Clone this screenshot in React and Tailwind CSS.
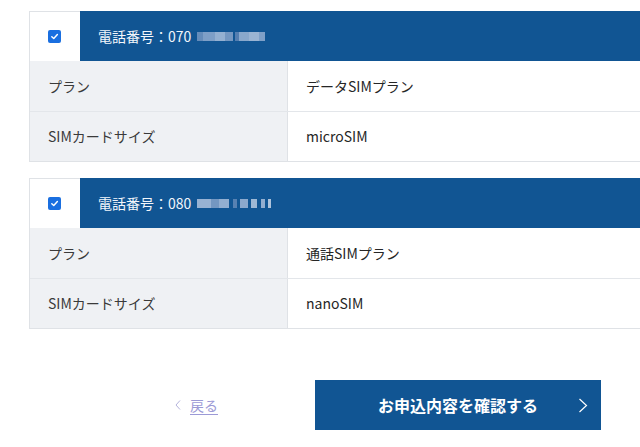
import React from "react";

const font = { fontFamily: '"Noto Sans CJK JP", "Noto Sans", sans-serif' };

function Mosaic({ blocks }) {
  return (
    <span className="inline-flex items-center ml-[6px] h-[10px] opacity-90">
      {blocks.map((b, i) => (
        <span
          key={i}
          className="inline-block h-[9px]"
          style={{ width: b[0], background: b[1], marginLeft: b[2] || 0 }}
        />
      ))}
    </span>
  );
}

function Check() {
  return (
    <span className="flex items-center justify-center w-[13px] h-[13px] rounded-[2px] bg-[#1a6fe0]">
      <svg width="9" height="9" viewBox="0 0 10 10">
        <path d="M2 5.2 L4.2 7.3 L8.2 2.8" fill="none" stroke="white" strokeWidth="1.6" strokeLinecap="round" strokeLinejoin="round" />
      </svg>
    </span>
  );
}

function Card({ number, blocks, plan, size }) {
  return (
    <div className="w-[640px] border-l border-b border-[#dfe2e6]">
      <div className="flex h-[50px]">
        <div className="w-[50px] flex items-center justify-center bg-white border-t border-[#dfe2e6] pr-[2px]">
          <Check />
        </div>
        <div className="flex-1 bg-[#115593] flex items-center pl-[18px] text-[#f2f6fb] text-[14px]">
          <span>電話番号：{number}</span>
          <Mosaic blocks={blocks} />
        </div>
      </div>
      {[
        ["プラン", plan],
        ["SIMカードサイズ", size],
      ].map(([k, v], i) => (
        <div key={i} className={"flex h-[50px] text-[14px] " + (i === 0 ? "" : "border-t border-[#e3e6ea]")}>
          <div className="w-[258px] bg-[#eff1f4] border-r border-[#dfe2e6] flex items-center pl-[18px] text-[#3a3a3a]">{k}</div>
          <div className="flex-1 bg-white flex items-center pl-[18px] text-[#262626]">{v}</div>
        </div>
      ))}
    </div>
  );
}

export default function App() {
  return (
    <div className="w-[640px] h-[447px] overflow-hidden bg-white" style={font}>
      <div className="pl-[29px] pt-[11px] flex flex-col gap-[16px]">
        <Card
          number="070"
          blocks={[
            ["6px", "#6f93bf"],
            ["12px", "#8aa8cd"],
            ["10px", "#a3bad8"],
            ["8px", "#7f9fc7"],
            ["4px", "#5c83b4", "2px"],
            ["10px", "#97b1d3"],
            ["10px", "#a9bfdb"],
            ["6px", "#8ba9ce"],
          ]}
          plan="データSIMプラン"
          size="microSIM"
        />
        <Card
          number="080"
          blocks={[
            ["14px", "#a7bdda"],
            ["8px", "#7f9fc7"],
            ["10px", "#a0b8d7"],
            ["4px", "#5f86b6", "4px"],
            ["8px", "#9ab3d4", "3px"],
            ["6px", "#aec3dd", "3px"],
            ["4px", "#a0b8d7", "4px"],
            ["3px", "#c0d0e5", "3px"],
          ]}
          plan="通話SIMプラン"
          size="nanoSIM"
        />
      </div>
      <div className="flex items-center mt-[51px]">
        <div className="w-[315px] flex justify-end pr-[97px]">
          <a className="flex items-center gap-[8px] text-[14px] text-[#9c9ad6]" href="#">
            <svg width="8" height="12" viewBox="0 0 8 12">
              <path d="M6 1.5 L2 6 L6 10.5" fill="none" stroke="#b4b3dc" strokeWidth="1" />
            </svg>
            <span className="underline underline-offset-[3px]">戻る</span>
          </a>
        </div>
        <button className="relative w-[286px] h-[50px] bg-[#115593] text-white text-[16px] font-bold flex items-center justify-center">
          お申込内容を確認する
          <svg className="absolute right-[13px] top-[18px]" width="10" height="15" viewBox="0 0 10 15">
            <path d="M1.5 1 L8.5 7.5 L1.5 14" fill="none" stroke="white" strokeWidth="1.2" />
          </svg>
        </button>
      </div>
    </div>
  );
}
